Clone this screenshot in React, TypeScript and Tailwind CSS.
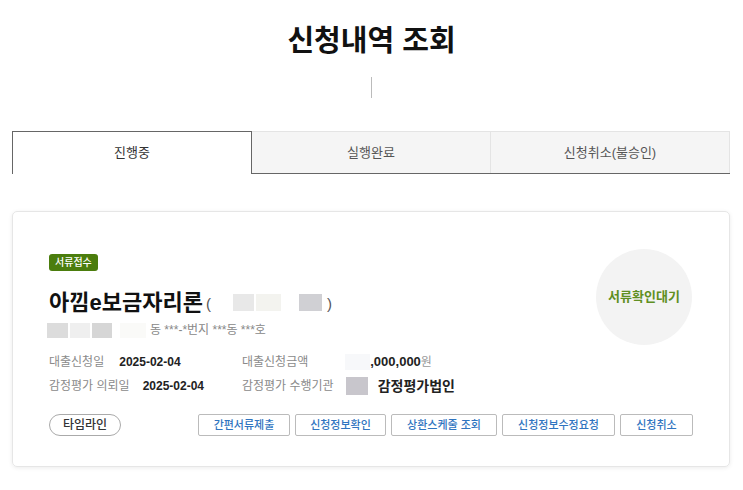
const font = { fontFamily: '"Liberation Sans", "Noto Sans CJK KR", sans-serif' };

function Tabs() {
  return (
    <div className="mx-[12px] mr-[13px] flex h-[43px] border-b border-[#666]">
      <div className="flex flex-1 items-center justify-center border-x border-t border-[#666] bg-white text-[13px] text-[#333] -mb-px">
        진행중
      </div>
      <div className="flex flex-1 items-center justify-center border-t border-r border-[#e4e4e4] bg-[#f5f5f5] text-[13px] text-[#555]">
        실행완료
      </div>
      <div className="flex flex-1 items-center justify-center border-t border-r border-[#e4e4e4] bg-[#f5f5f5] text-[13px] text-[#555]">
        신청취소(불승인)
      </div>
    </div>
  );
}

function Info() {
  return (
    <div className="mt-[16px] flex flex-col gap-[7px] text-[12px]">
      <div className="flex h-[16px] items-center">
        <div className="flex w-[193px] items-center gap-[15px]">
          <span className="text-[#8a8a8a]">대출신청일</span>
          <span className="font-bold text-[#222]">2025-02-04</span>
        </div>
        <span className="text-[#8a8a8a]">대출신청금액</span>
        <span className="ml-[37px] h-[16px] w-[25px] bg-[#f7f8fa]" />
        <span className="text-[13px] font-bold text-[#222]">,000,000</span>
        <span className="text-[#999]">원</span>
      </div>
      <div className="flex h-[18px] items-center">
        <div className="flex w-[193px] items-center gap-[13px]">
          <span className="text-[#8a8a8a]">감정평가 의뢰일</span>
          <span className="font-bold text-[#222]">2025-02-04</span>
        </div>
        <span className="text-[#8a8a8a]">감정평가 수행기관</span>
        <span className="ml-[12px] h-[18px] w-[22px] bg-[#c8c6cc]" />
        <span className="ml-[10px] text-[14px] font-bold text-[#222]">감정평가법인</span>
      </div>
    </div>
  );
}

function Buttons() {
  const items = [
    ['간편서류제출', 'w-[92px]'],
    ['신청정보확인', 'w-[91px]'],
    ['상환스케줄 조회', 'w-[106px]'],
    ['신청정보수정요청', 'w-[113px]'],
    ['신청취소', 'w-[73px]'],
  ];
  return (
    <div className="mt-[19px] flex items-center justify-between">
      <button className="h-[22px] w-[72px] rounded-full border border-[#aaa] text-[12px] font-medium text-[#333]">
        타임라인
      </button>
      <div className="flex gap-[5px]">
        {items.map(([label, w]) => (
          <button
            key={label}
            className={`${w} h-[22px] rounded-[2px] border border-[#bbb] bg-white text-[11px] font-medium text-[#2f74c0]`}
          >
            {label}
          </button>
        ))}
      </div>
    </div>
  );
}

export default function App() {
  return (
    <div className="min-h-[490px] bg-white" style={font}>
      <h1 className="pt-[22px] text-center text-[29px] font-bold leading-[38px] text-[#111]">신청내역 조회</h1>
      <div className="mx-auto mt-[17px] h-[21px] w-px bg-[#bbb]" />
      <div className="mt-[33px]">
        <Tabs />
      </div>
      <div className="mx-[12px] mr-[13px] mt-[37px] rounded-[5px] border border-[#e6e6e6] px-[36px] pt-[37px] pb-[30px] shadow-[0_1px_4px_rgba(0,0,0,0.08)]">
        <div className="flex items-start justify-between">
          <div>
            <span className="inline-flex h-[17px] items-center rounded-[3px] bg-[#4b7d0d] px-[6px] text-[10px] font-medium text-white">
              서류접수
            </span>
            <div className="mt-[16px] flex h-[26px] items-center">
              <span className="text-[22px] font-bold text-[#111]">아낌e보금자리론</span>
              <span className="ml-[3px] mt-[4px] text-[15px] text-[#555]">(</span>
              <span className="ml-[22px] h-[17px] w-[21px] bg-[#e8e8e8]" />
              <span className="ml-[2px] h-[17px] w-[25px] bg-[#f3f3ef]" />
              <span className="ml-[18px] h-[17px] w-[23px] bg-[#d0d0d4]" />
              <span className="ml-[5px] mt-[4px] text-[15px] text-[#555]">)</span>
            </div>
            <div className="mt-[7px] flex h-[16px] items-center text-[12px] text-[#888]">
              <span className="-ml-[2px] h-[15px] w-[21px] bg-[#dcdcdc]" />
              <span className="ml-[2px] h-[15px] w-[20px] bg-[#efefef]" />
              <span className="ml-[2px] h-[15px] w-[20px] bg-[#d6d6d6]" />
              <span className="ml-[8px] h-[15px] w-[26px] bg-[#fafaf8]" />
              <span className="ml-[4px]">동 ***-*번지 ***동 ***호</span>
            </div>
            <Info />
          </div>
          <div className="mr-[1px] flex h-[96px] w-[96px] items-center justify-center rounded-full bg-[#f3f3f3] text-[13px] font-bold text-[#5f8f22]">
            서류확인대기
          </div>
        </div>
        <Buttons />
      </div>
    </div>
  );
}
